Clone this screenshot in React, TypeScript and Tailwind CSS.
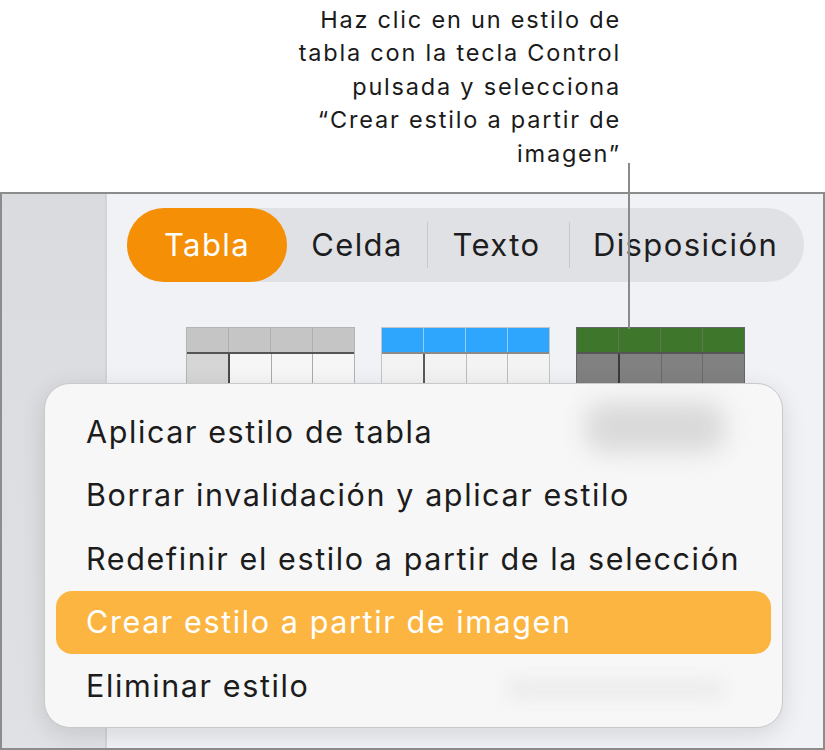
import React from 'react';

const menuItems = [
  'Aplicar estilo de tabla',
  'Borrar invalidación y aplicar estilo',
  'Redefinir el estilo a partir de la selección',
  'Crear estilo a partir de imagen',
  'Eliminar estilo',
];

type Thumb = {
  head: string;
  headSep: string;
  headLine: string;
  body: string;
  bodyFirst: string;
  bodySep: string;
  firstSep: string;
  frame: string;
};

const thumbs: Thumb[] = [
  { head: 'bg-[#c4c5c4]', headSep: 'border-[#adaead]', headLine: 'border-[#555]', body: 'bg-[#f6f6f6]', bodyFirst: 'bg-[#d6d6d6]', bodySep: 'border-[#aaa]', firstSep: 'border-[#4a4a4a]', frame: 'border-[#b4b4b4]' },
  { head: 'bg-[#2ea6fd]', headSep: 'border-[#8fd0ff]', headLine: 'border-[#8a8a8a]', body: 'bg-[#f3f3f3]', bodyFirst: 'bg-[#f3f3f3]', bodySep: 'border-[#bdbdbd]', firstSep: 'border-[#5a5a5a]', frame: 'border-[#c4c4c4]' },
  { head: 'bg-[#3e762b]', headSep: 'border-[#5c7a52]', headLine: 'border-[#555]', body: 'bg-[#818181]', bodyFirst: 'bg-[#818181]', bodySep: 'border-[#6a6a6a]', firstSep: 'border-[#3a3a3a]', frame: 'border-[#666]' },
];

const TableThumb: React.FC<{ t: Thumb }> = ({ t }) => (
  <div className={`w-[169px] border ${t.frame}`}>
    <div className={`flex h-[26px] border-b-2 ${t.headLine}`}>
      {[0, 1, 2, 3].map((i) => (
        <div key={i} className={`flex-1 ${t.head} ${i > 0 ? `border-l ${t.headSep}` : ''}`} />
      ))}
    </div>
    <div className="flex h-[30px]">
      {[0, 1, 2, 3].map((i) => (
        <div
          key={i}
          className={`flex-1 ${i === 0 ? t.bodyFirst : t.body} ${i === 1 ? `border-l-2 ${t.firstSep}` : i > 1 ? `border-l ${t.bodySep}` : ''}`}
        />
      ))}
    </div>
  </div>
);

export default function App() {
  return (
    <div className="relative w-[825px] h-[750px] bg-white overflow-hidden font-['Inter','Roboto',sans-serif] text-[#1d1d1f]">
      {/* callout */}
      <div className="h-[192px] flex justify-end pr-[204px] pt-[3px]">
        <p className="text-right text-[23.5px] leading-[33.4px] tracking-[1.8px] text-[#1a1a1a]">
          Haz clic en un estilo de
          <br />
          tabla con la tecla Control
          <br />
          pulsada y selecciona
          <br />
          “Crear estilo a partir de
          <br />
          imagen”
        </p>
      </div>

      {/* window */}
      <div className="h-[558px] flex border-2 border-[#8c8c8c]">
        <div className="w-[105px] bg-gradient-to-b from-[#dadbde] to-[#e0e1e4] border-r-2 border-[#d3d4d7]" />
        <div className="flex-1 bg-[#f1f2f5] pt-[14px] pl-[20px]">
          <div className="w-[677px] h-[74px] rounded-full bg-[#e0e1e4] flex items-center text-[31px] tracking-[1.4px]">
            <div className="w-[160px] h-full rounded-full bg-[#f58f06] text-white flex items-center justify-center">
              Tabla
            </div>
            <div className="w-[140px] flex justify-center">Celda</div>
            <div className="w-px h-[46px] bg-[#c8c9cc]" />
            <div className="w-[141px] flex justify-center pr-[4px]">Texto</div>
            <div className="w-px h-[46px] bg-[#c8c9cc]" />
            <div className="flex-1 flex justify-center pr-[3px]">Disposición</div>
          </div>
          <div className="mt-[45px] ml-[59px] flex gap-[26px]">
            {thumbs.map((t, i) => (
              <TableThumb key={i} t={t} />
            ))}
          </div>
        </div>
      </div>

      {/* leader line */}
      <div className="absolute left-[628px] top-[163px] w-[2px] h-[166px] bg-[#8a8a8a]" />

      {/* context menu */}
      <div className="absolute left-[44px] top-[383px] w-[739px] h-[345px] rounded-[26px] bg-[#f7f7f8] border border-[#c9c9cb] shadow-[0_6px_24px_rgba(0,0,0,0.12)] overflow-hidden">
        <div className="absolute left-[540px] top-[18px] w-[140px] h-[50px] rounded-[20px] bg-[#d9d9d9] blur-[12px]" />
        <div className="absolute left-[460px] top-[295px] w-[220px] h-[20px] rounded-[10px] bg-[#ececec] blur-[8px]" />
        <div className="relative pt-[16px] px-[11px] flex flex-col">
          {menuItems.map((m, i) => (
            <div
              key={m}
              className={`h-[63.5px] flex items-center pl-[30px] rounded-[16px] text-[30.5px] tracking-[1.6px] ${i === 3 ? 'bg-[#fcb541] text-white' : 'text-[#1c1c1c]'}`}
            >
              {m}
            </div>
          ))}
        </div>
      </div>
    </div>
  );
}
